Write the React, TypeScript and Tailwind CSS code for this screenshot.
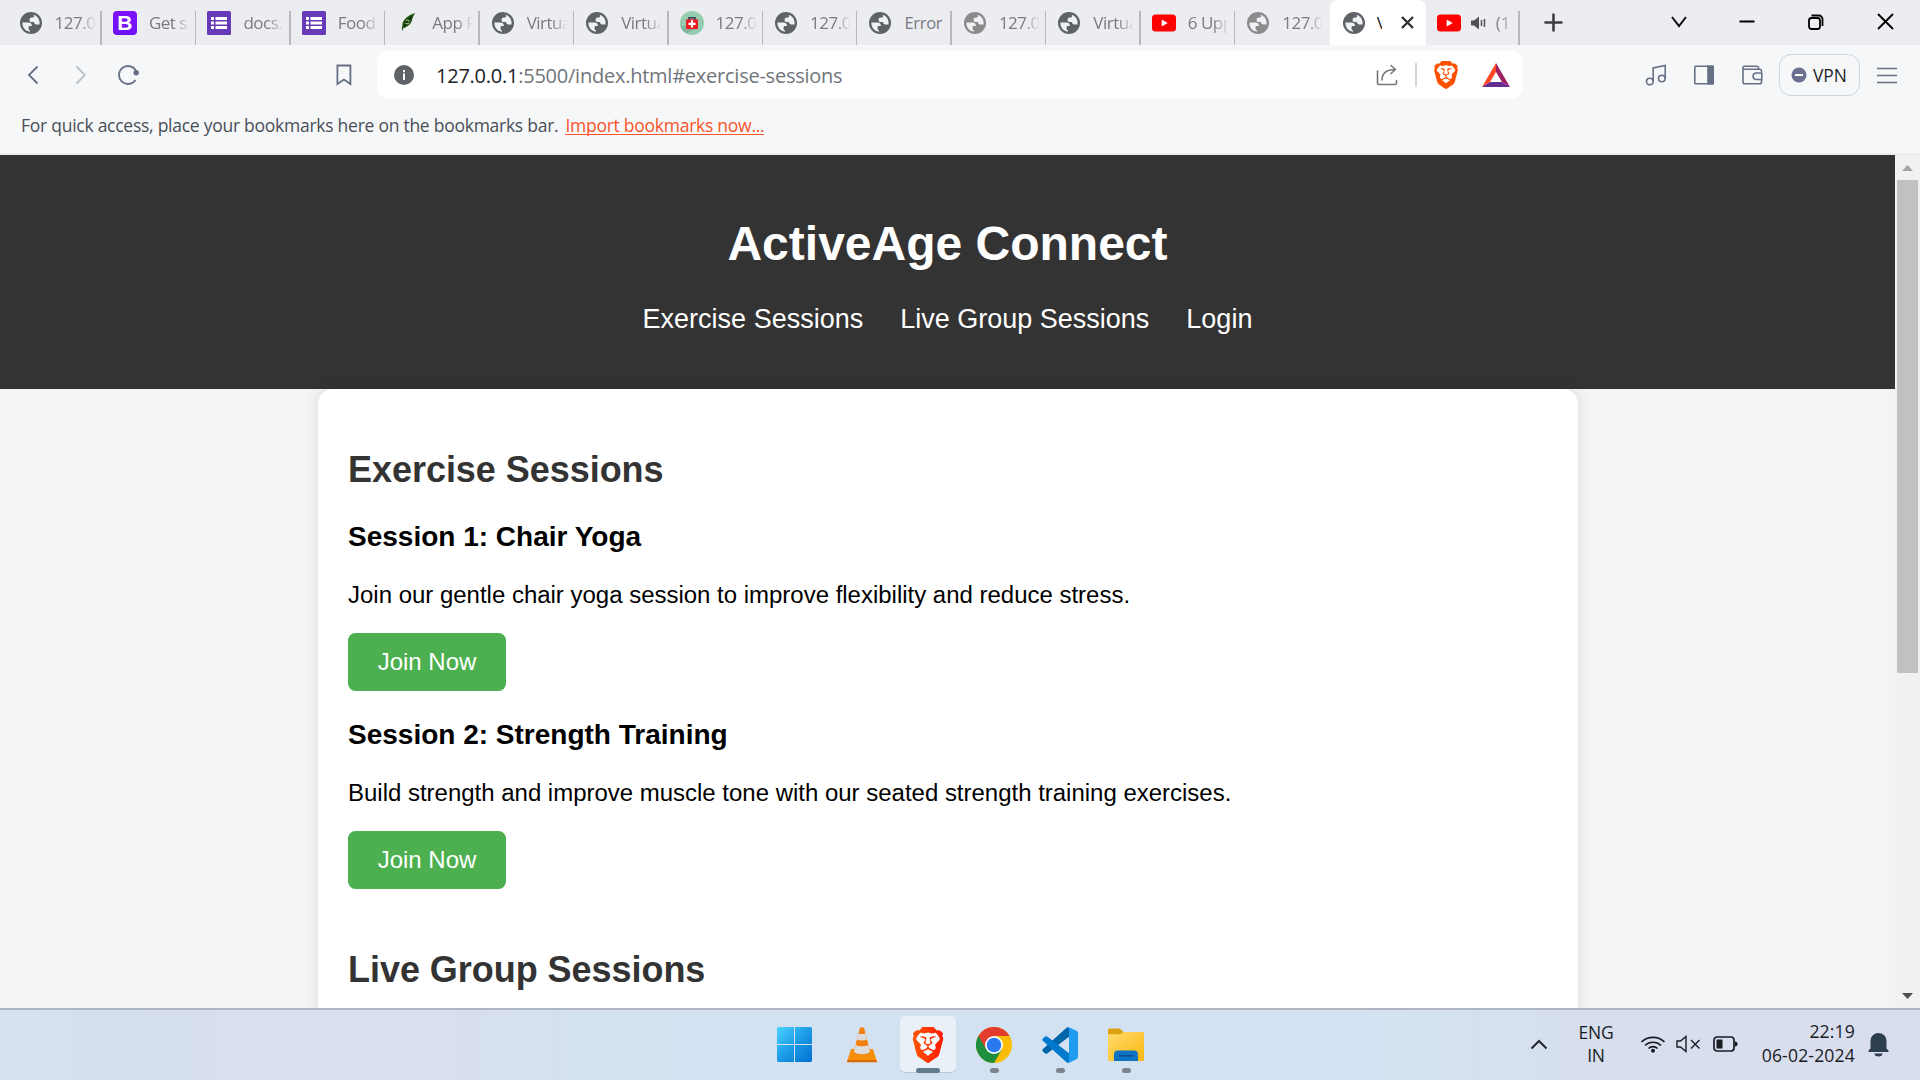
import React from "react";
import { SiBrave } from "react-icons/si";

type IconKind = "globe" | "globeMuted" | "bootstrap" | "forms" | "leaf" | "kit" | "youtube";

function Globe({ muted = false }: { muted?: boolean }) {
  return (
    <svg width="22" height="22" viewBox="0 0 22 22">
      <circle cx="11" cy="11" r="11" fill={muted ? "#8b8b8b" : "#5f6368"} />
      <path
        d="M2.4 10.6h6.2c2.3 0 3.3 1.2 3.3 3.4H9.6c-.7 0-1 .4-1 1v2.1c0 .9.6 1.4 1.4 1.4v1.2C5.5 19.500 2.300 15.500 2.400 10.600z"
        fill="#f0f1f4"
      />
      <path
        d="M13.500 2.700c3.700 1.100 6.100 4.400 6.100 8.300v1.500h-3.200c-1.700 0-2.300-1-2.300-2.400h-2.200c-1.500 0-2.300-.9-2.300-2.200 0-1.500.9-2.300 2.300-2.300h.7c1 0 1.500-.6 1.500-1.500z"
        fill="#f0f1f4"
      />
    </svg>
  );
}

function Youtube() {
  return (
    <svg width="24" height="24" viewBox="0 0 24 24">
      <rect y="3.500" width="24" height="17" rx="3.500" fill="#f00" />
      <path d="M9.700 8.500v7l6-3.500z" fill="#fff" />
    </svg>
  );
}

function TabIcon({ kind }: { kind: IconKind }) {
  switch (kind) {
    case "globe":
      return <Globe />;
    case "globeMuted":
      return <Globe muted />;
    case "youtube":
      return <Youtube />;
    case "bootstrap":
      return (
        <div className="flex size-6 items-center justify-center rounded-[4px] bg-linear-to-b from-[#8010fb] to-[#6c12f8] font-['Liberation_Sans',sans-serif] text-[21px] leading-6 font-bold text-white">
          B
        </div>
      );
    case "forms":
      return (
        <svg width="24" height="24" viewBox="0 0 24 24">
          <rect width="24" height="24" rx="1.500" fill="#673ab7" />
          <path d="M4 6h3v3H4zM8.500 6H20v3H8.500zM4 10.500h3v3H4zM8.500 10.500H20v3H8.500zM4 15h3v3H4zM8.500 15H20v3H8.500z" fill="#fff" />
        </svg>
      );
    case "leaf":
      return (
        <svg width="24" height="24" viewBox="0 0 24 24">
          <path d="M19 2C14 3.500 8 7 6.500 12.500c-.2 1.500 0 2.800-.6 4.200L6 20.500l1.300-3.300C12.500 16 15.500 12 16.200 8.500 16.800 6 17.800 4.500 19 2z" fill="#23560f" />
          <path d="M8 15.500c2-4 4-6.500 8-10" stroke="#0c2406" strokeWidth="1.200" fill="none" />
          <path d="M10 9.500q2-1 3.500.5M9.500 12.500q2 .5 3.500-.5" stroke="#dfe8dc" strokeWidth=".8" fill="none" />
        </svg>
      );
    case "kit":
      return (
        <svg width="24" height="24" viewBox="0 0 24 24">
          <circle cx="12" cy="12" r="12" fill="#96cdb0" />
          <path d="M6.500 15L.5 14.500A12 12 0 0 0 6 22.300L17 18z" fill="#84b39a" />
          <path d="M9 9V6.800h6V9" fill="none" stroke="#2b3f5c" strokeWidth="1.600" />
          <rect x="6" y="8.300" width="12" height="9.700" rx="1" fill="#ed1c24" />
          <path d="M10.900 9.300h2.200v2.500h2.500v2.200h-2.500v2.500h-2.200v-2.500H8.400v-2.200h2.500z" fill="#fff" />
        </svg>
      );
  }
}

const tabs: { icon: IconKind; title: string; noLine?: boolean }[] = [
  { icon: "globe", title: "127.0" },
  { icon: "bootstrap", title: "Get s" },
  { icon: "forms", title: "docs." },
  { icon: "forms", title: "Food" },
  { icon: "leaf", title: "App F" },
  { icon: "globe", title: "Virtua" },
  { icon: "globe", title: "Virtua" },
  { icon: "kit", title: "127.0" },
  { icon: "globe", title: "127.0" },
  { icon: "globe", title: "Error" },
  { icon: "globeMuted", title: "127.0" },
  { icon: "globe", title: "Virtua" },
  { icon: "youtube", title: "6 Upp" },
  { icon: "globeMuted", title: "127.0", noLine: true },
];

function TabStrip() {
  return (
    <div className="flex h-[45px] bg-[#ecedf1] pl-[7.500px]">
      {tabs.map((t, i) => (
        <div key={i} className="relative flex w-[94.450px] shrink-0 items-center">
          <div className="ml-[11px] flex size-6 shrink-0 items-center justify-center">
            <TabIcon kind={t.icon} />
          </div>
          {t.title === "Error" ? (
            <div className="ml-[12px] text-[16.500px] leading-6 tracking-[-0.300px] whitespace-nowrap text-[#797b80]">{t.title}</div>
          ) : (
            <div className="ml-[12px] w-[41px] overflow-hidden text-[17px] leading-6 tracking-[-0.500px] whitespace-nowrap text-[#797b80] [mask-image:linear-gradient(to_right,#000_60%,transparent_100%)]">
              {t.title}
            </div>
          )}
          {!t.noLine && <div className="absolute right-0 bottom-0 h-[34px] w-[1.500px] bg-[#b9b9b9]" />}
        </div>
      ))}
      <div className="flex w-[96px] shrink-0 items-center rounded-t-[8px] bg-white">
        <div className="ml-[13px]">
          <Globe />
        </div>
        <div className="ml-[12px] w-[5.500px] overflow-hidden text-[17px] leading-6 text-[#202124]">V</div>
        <svg className="ml-[18px]" width="15" height="15" viewBox="0 0 15 15" stroke="#2d2f33" strokeWidth="2.300">
          <path d="M2 2l11 11M13 2L2 13" />
        </svg>
      </div>
      <div className="relative flex w-[94px] shrink-0 items-center">
        <div className="ml-[11px]">
          <Youtube />
        </div>
        <svg className="ml-[9px]" width="17" height="14" viewBox="0 0 17 14" fill="#4f5155">
          <path d="M1 4.500h3L9 .5v13l-5-4H1z" />
          <path d="M11.500 4v6M14.500 3v8" stroke="#4f5155" strokeWidth="1.500" />
        </svg>
        <div className="ml-[9px] w-[13px] overflow-hidden text-[17px] leading-6 whitespace-nowrap text-[#808287] [mask-image:linear-gradient(to_right,#000_30%,#0006)]">
          (1
        </div>
        <div className="absolute right-0 bottom-0 h-[34px] w-[1.500px] bg-[#b9b9b9]" />
      </div>
      <svg className="mt-[13px] ml-[24px]" width="19" height="19" viewBox="0 0 19 19" stroke="#3c3e42" strokeWidth="2.600" strokeLinecap="round">
        <path d="M9.500 1.500v16M1.500 9.500h16" />
      </svg>
      <div className="mr-[26px] ml-auto flex items-center gap-[53px] pb-[2px]">
        <svg className="-mr-[1px]" width="16" height="12" viewBox="0 0 16 12" fill="none" stroke="#111" strokeWidth="2">
          <path d="M1 1l7 9 7-9" />
        </svg>
        <svg width="16" height="16" viewBox="0 0 16 16" stroke="#000" strokeWidth="2">
          <path d="M.5 7.500h15" />
        </svg>
        <svg width="16" height="16" viewBox="0 0 16 16" fill="none" stroke="#000" strokeWidth="1.800">
          <rect x="1" y="4" width="11" height="11" rx="2.500" />
          <path d="M3.500 1.500h7.500a3.500 3.500 0 0 1 3.500 3.500v7" />
        </svg>
        <svg width="17" height="17" viewBox="0 0 17 17" stroke="#000" strokeWidth="1.800">
          <path d="M1 1l15 15M16 1L1 16" />
        </svg>
      </div>
    </div>
  );
}

function Toolbar() {
  return (
    <div className="flex h-[60px] items-center bg-[#f5f7f9] text-[#667085]">
      <svg className="ml-[27px]" width="12" height="20" viewBox="0 0 12 20" fill="none" stroke="#667085" strokeWidth="1.800">
        <path d="M10.500 1.500L2 10l8.500 8.500" />
      </svg>
      <svg className="ml-[36px]" width="12" height="20" viewBox="0 0 12 20" fill="none" stroke="#bcc0c9" strokeWidth="1.800">
        <path d="M1.500 1.500L10 10l-8.500 8.500" />
      </svg>
      <svg className="ml-[31px]" width="22" height="20" viewBox="0 0 22 20" fill="none" stroke="#667085" strokeWidth="1.800">
        <path d="M18.300 6.500A9 9 0 1 0 17.500 15" />
        <circle cx="18.200" cy="7.800" r="2.700" fill="#667085" stroke="none" />
      </svg>
      <svg className="ml-[196px]" width="16" height="22" viewBox="0 0 16 22" fill="none" stroke="#667085" strokeWidth="1.800">
        <path d="M1.400 1.500h13v18.500l-6.500-4.500-6.500 4.500z" />
      </svg>
      <div className="ml-[25px] flex h-[48px] w-[1146px] items-center rounded-[12px] bg-white">
        <svg className="ml-[17px]" width="20" height="20" viewBox="0 0 20 20">
          <circle cx="10" cy="10" r="10" fill="#5f6368" />
          <path d="M9 8.600h2V15H9zM9 5h2v2.200H9z" fill="#fff" />
        </svg>
        <div className="ml-[22px] pt-[1px] text-[20px] leading-7 tracking-[-0.240px] whitespace-nowrap text-[#70757a]">
          <span className="text-[#202124]">127.0.0.1</span>:5500/index.html#exercise-sessions
        </div>
        <svg className="mr-[17px] ml-auto" width="22" height="22" viewBox="0 0 22 22" fill="none" stroke="#767676" strokeWidth="1.600" strokeLinecap="round" strokeLinejoin="round">
          <path d="M1.500 7v12a1.500 1.500 0 0 0 1.500 1.500h16a1.500 1.500 0 0 0 1.500-1.500v-2.500M6 16C6 9.500 10 5.500 19.500 5.500M15 1.500l4.500 4-4.500 4" />
        </svg>
        <div className="mr-[15px] h-6 w-[2px] bg-[#d5d5d5]" />
        <SiBrave className="mr-[22px] size-[28px] text-[#ff5000]" />
        <svg className="mr-[13px]" width="28" height="24" viewBox="0 0 28 24">
          <path d="M14 0L0 24l8-5 6-10z" fill="#ff4724" />
          <path d="M14 0l14 24-8-5-6-10z" fill="#9e1f63" />
          <path d="M0 24l8-5h12l8 5z" fill="#662d91" />
        </svg>
      </div>
      <svg className="ml-[122px]" width="22" height="22" viewBox="0 0 22 22" fill="none" stroke="#667085" strokeWidth="1.600">
        <circle cx="4.800" cy="17.500" r="3.300" />
        <circle cx="16.800" cy="14.500" r="3.300" />
        <path d="M8.200 17.500V4l12-2.500v13" />
      </svg>
      <svg className="ml-[27px]" width="20" height="20" viewBox="0 0 20 20" fill="none" stroke="#667085" strokeWidth="1.600">
        <rect x=".8" y="1.300" width="18.400" height="17.400" rx=".8" />
        <path d="M14 1.300h5v17.400h-5z" fill="#667085" />
      </svg>
      <svg className="ml-[28px]" width="21" height="20" viewBox="0 0 21 20" fill="none" stroke="#667085" strokeWidth="1.600">
        <path d="M19.500 7V6a1.800 1.800 0 0 0-1.800-1.700H1V17a1.800 1.800 0 0 0 1.800 1.800h14.900a1.800 1.800 0 0 0 1.800-1.800v-2M1 4.300V3a1.800 1.800 0 0 1 1.800-1.800h12a1.800 1.800 0 0 1 1.800 1.800v1.300" />
        <path d="M19.800 8h-6a3.300 3.300 0 0 0 0 6.500h6z" />
      </svg>
      <div className="ml-[16px] flex h-[42px] w-[81px] items-center rounded-[12px] border-[1.500px] border-[#d0d4dd] pl-[11px]">
        <svg width="16" height="16" viewBox="0 0 16 16">
          <circle cx="8" cy="8" r="7.500" fill="#6b7090" />
          <path d="M4 8h8" stroke="#fff" strokeWidth="2" />
        </svg>
        <div className="ml-[6px] text-[17.400px] leading-6 text-[#1d1f25]">VPN</div>
      </div>
      <svg className="ml-[17px]" width="20" height="18" viewBox="0 0 20 18" stroke="#667085" strokeWidth="1.700">
        <path d="M0 2.500h20M0 9.500h20M0 16.500h20" />
      </svg>
    </div>
  );
}

function Session({ title, text }: { title: string; text: string }) {
  return (
    <>
      <h3 className="text-[28px] leading-[32px] font-bold">{title}</h3>
      <p className="mt-[28px] text-[23.980px] leading-[27px]">{text}</p>
      <button className="mt-[25px] block h-[58px] w-[158px] rounded-[7.500px] bg-[#4caf50] text-center text-[24px] leading-[28px] text-white">
        Join Now
      </button>
    </>
  );
}

function WebPage() {
  return (
    <div className="h-[853px] w-[1895px] overflow-hidden bg-[#f4f4f4] font-['Liberation_Sans',Arial,sans-serif] text-black">
      <header className="flex h-[234px] flex-col items-center bg-[#333] pt-[61px] text-white">
        <h1 className="text-[48px] leading-[55px] font-bold">ActiveAge Connect</h1>
        <nav className="mt-[33px] flex gap-[37px] text-[27px] leading-[31px]">
          <a>Exercise Sessions</a>
          <a>Live Group Sessions</a>
          <a>Login</a>
        </nav>
      </header>
      <main className="ml-[318px] h-[900px] w-[1260px] rounded-[15px] bg-white px-[30px] pt-[60px] shadow-[0_0_15px_rgba(0,0,0,0.1)]">
        <h2 className="mb-[31px] text-[36px] leading-[41px] font-bold tracking-[-0.040px] text-[#333]">Exercise Sessions</h2>
        <Session title="Session 1: Chair Yoga" text="Join our gentle chair yoga session to improve flexibility and reduce stress." />
        <div className="h-[28px]" />
        <Session
          title="Session 2: Strength Training"
          text="Build strength and improve muscle tone with our seated strength training exercises."
        />
        <h2 className="mt-[60px] text-[36px] leading-[41px] font-bold tracking-[-0.040px] text-[#333]">Live Group Sessions</h2>
      </main>
    </div>
  );
}

function Scrollbar() {
  return (
    <div className="flex w-[25px] flex-col items-center bg-[#f1f1f1]">
      <svg className="mt-[10px]" width="11" height="6" viewBox="0 0 11 6">
        <path d="M5.500 0L11 6H0z" fill="#a3a3a3" />
      </svg>
      <div className="mt-[9px] h-[493px] w-[21px] bg-[#c1c1c1]" />
      <svg className="mt-auto mb-[9px]" width="11" height="6" viewBox="0 0 11 6">
        <path d="M5.500 6L11 0H0z" fill="#505050" />
      </svg>
    </div>
  );
}

function Windows() {
  return (
    <svg width="35" height="35" viewBox="0 0 35 35">
      <defs>
        <linearGradient id="win" x1="0" y1="0" x2="35" y2="35" gradientUnits="userSpaceOnUse">
          <stop stopColor="#4dd2ff" />
          <stop offset=".5" stopColor="#1c9be6" />
          <stop offset="1" stopColor="#0070d0" />
        </linearGradient>
      </defs>
      <path d="M1 0h16v17H0V1zM18 0h16l1 1v16H18zM0 18h17v17H1l-1-1zM18 18h17v16l-1 1H18z" fill="url(#win)" />
    </svg>
  );
}

function Vlc() {
  return (
    <svg width="30" height="36" viewBox="0 0 30 36">
      <path d="M4 22h22l4 12.500H0z" fill="#f78f0a" />
      <path d="M.4 33h29.200l.4 2.200H0z" fill="#d96a00" />
      <path d="M13 .8q2-1.300 4 0L23 24q0 4-8 4t-8-4z" fill="#f27f0c" />
      <path d="M11.500 6.500q3.500 1.200 7 0l1.600 6q-5 1.900-10.200 0zM8.600 18q6.400 2.600 12.800 0l1.600 6.200q-1 3-8 3t-8-3z" fill="#dcdcdc" />
    </svg>
  );
}

function Chrome() {
  return (
    <svg width="36" height="36" viewBox="0 0 36 36">
      <circle cx="18" cy="18" r="18" fill="#fbbc05" />
      <path d="M18 18L2.400 9A18 18 0 0 0 18 36l7.800-13.500z" fill="#1e8e3e" />
      <path d="M2.400 9A18 18 0 0 1 33.600 9H18v9l-7.800 4.500z" fill="#e33b2e" />
      <path d="M2.400 9l7.800 13.500L18 18z" fill="#1e8e3e" />
      <path d="M2.400 9l7.800 13.500L18 9z" fill="#e33b2e" />
      <path d="M2.400 9L10.200 22.500 4 24z" fill="#1e8e3e" />
      <circle cx="18" cy="18" r="9" fill="#fff" />
      <circle cx="18" cy="18" r="7.300" fill="#2a79f0" />
    </svg>
  );
}

function VsCode() {
  return (
    <svg width="36" height="36" viewBox="0 0 36 36">
      <path d="M27 .3v9.500L5.200 26.500q-1 .7-2 0L.7 24.300q-1-1 0-2L24.500.8Q25.700-.2 27 .3z" fill="#0065a9" />
      <path d="M27 35.700v-9.500L5.200 9.500q-1-.7-2 0L.7 11.700q-1 1 0 2l23.800 21.500q1.200 1 2.500.5z" fill="#007acc" />
      <path d="M27 .3l7.500 3.500Q36 4.600 36 6.200v23.600q0 1.600-1.500 2.400L27 35.700q-1 .4-2-.5 2 1 2-1.500V2.300Q27-.2 25 .8q1-1 2-.5z" fill="#1f9cf0" />
    </svg>
  );
}

function Folder() {
  return (
    <svg width="36" height="34" viewBox="0 0 36 34">
      <defs>
        <linearGradient id="fold" x1="0" y1="0" x2="1" y2="1">
          <stop stopColor="#ffdb6e" />
          <stop offset="1" stopColor="#fbb80f" />
        </linearGradient>
      </defs>
      <path d="M0 2Q0 .500 1.500.500h9Q12 .500 13 1.500L15.500 4H35q1 0 1 1v6H0z" fill="#dda00f" />
      <path d="M0 7q0-.800 1-.800h11L15.500 4H35q1 0 1 1v27q0 1-1 1H1q-1 0-1-1z" fill="url(#fold)" />
      <path d="M6 33v-6.500q0-4 4-4h16q4 0 4 4V33z" fill="#0f73c4" />
      <path d="M11 27.800h14" stroke="#0a4f94" strokeWidth="1.500" />
    </svg>
  );
}

function BraveTask() {
  return (
    <div className="relative">
      <svg width="0" height="0" className="absolute">
        <defs>
          <linearGradient id="brave" x1="0" y1="0" x2="1" y2="0">
            <stop stopColor="#ff5500" />
            <stop offset="1" stopColor="#ff1a00" />
          </linearGradient>
        </defs>
      </svg>
      <div className="absolute top-[7px] left-[8px] h-[22px] w-[20px] bg-white [clip-path:polygon(0_0,100%_0,90%_60%,50%_100%,10%_60%)]" />
      <SiBrave className="relative size-9" style={{ fill: "url(#brave)" }} />
    </div>
  );
}

function TaskCell({ children, running = false, active = false }: { children: React.ReactNode; running?: boolean; active?: boolean }) {
  return (
    <div className="relative flex h-[70px] w-[66px] items-center justify-center">
      {active && <div className="absolute top-[6px] left-[5px] h-[56px] w-[56px] rounded-[5px] bg-[#e9f0f8] shadow-[0_1px_1px_#b9c7d6]" />}
      <div className="relative -mt-[1px]">{children}</div>
      {running && <div className="absolute bottom-[7px] left-[29px] h-[5px] w-[9px] rounded-full bg-[#7c848c]" />}
      {active && <div className="absolute bottom-[7px] left-[21px] h-[5px] w-[24px] rounded-full bg-[#627a89]" />}
    </div>
  );
}

function Taskbar() {
  return (
    <div className="flex h-[72px] items-start border-t-2 border-[#aeb5c1] bg-[linear-gradient(90deg,#d6e2f0_0%,#d5dfef_8%,#d8dfee_12%,#d8dfee_23%,#d3e1f1_31%,#d3e2f2_70%,#d5e0f0_79%,#d8deee_84%,#d8deee_100%)] text-[#191c22]">
      <div className="ml-[761px] flex">
        <TaskCell>
          <Windows />
        </TaskCell>
        <div className="w-[2px]" />
        <TaskCell>
          <Vlc />
        </TaskCell>
        <TaskCell active>
          <BraveTask />
        </TaskCell>
        <TaskCell running>
          <Chrome />
        </TaskCell>
        <TaskCell running>
          <VsCode />
        </TaskCell>
        <TaskCell running>
          <Folder />
        </TaskCell>
      </div>
      <svg className="mt-[29px] ml-[371px]" width="18" height="11" viewBox="0 0 18 11" fill="none" stroke="#23262c" strokeWidth="2">
        <path d="M1.500 9.500L9 2l7.500 7.500" />
      </svg>
      <div className="mt-[11px] ml-[28px] w-[40px] text-center text-[17.500px] leading-[23px] tracking-[-0.200px]">
        ENG
        <br />
        IN
      </div>
      <svg className="mt-[25px] ml-[24px]" width="26" height="18" viewBox="0 0 26 18" fill="none" stroke="#191c22" strokeWidth="1.700">
        <path d="M1.500 7a16.500 16.500 0 0 1 23 0M5 10.500a11.500 11.500 0 0 1 16 0M8.500 13.500a6.500 6.500 0 0 1 9 0" />
        <circle cx="13" cy="15.800" r="2" fill="#191c22" stroke="none" />
      </svg>
      <svg className="mt-[25px] ml-[10px]" width="25" height="18" viewBox="0 0 25 18" fill="none" stroke="#191c22" strokeWidth="1.400">
        <path d="M1 6h3.500l5.500-4.500v15L4.500 12H1zM15 5l8.500 8.500M23.500 5L15 13.500" />
      </svg>
      <svg className="mt-[26px] ml-[12px]" width="25" height="16" viewBox="0 0 25 16">
        <rect x="1" y="1" width="20" height="14" rx="3" fill="none" stroke="#191c22" strokeWidth="1.700" />
        <rect x="3.500" y="3.500" width="6" height="9" rx=".5" fill="#191c22" />
        <path d="M22 5.500q2.500 0 2.500 2.500T22 10.500z" fill="#191c22" />
      </svg>
      <div className="mt-[9px] ml-auto text-right text-[17.600px] leading-[24px] tracking-[0.150px]">
        22:19
        <br />
        06-02-2024
      </div>
      <svg className="mt-[23px] mr-[31px] ml-[13px]" width="21" height="24" viewBox="0 0 21 24" fill="#2d3e4e">
        <path d="M10.500 0a8 8 0 0 0-8 8v7.500L.5 17.500V19h20v-1.500l-2-2V8a8 8 0 0 0-8-8zM6.500 20.500h8a4 3 0 0 1-8 0z" />
      </svg>
    </div>
  );
}

export default function App() {
  return (
    <div className="h-[1080px] w-[1920px] overflow-hidden font-['Open_Sans','Noto_Sans',sans-serif]">
      <TabStrip />
      <Toolbar />
      <div className="flex h-[50px] border-b-2 border-[#e9ecef] bg-[#f5f7f9] pt-[7px] pl-[21px] text-[17.500px] leading-[26px] tracking-[-0.260px] whitespace-nowrap text-[#4a4f57]">
        <span>For quick access, place your bookmarks here on the bookmarks bar.</span>
        <a className="ml-[7px] h-[23px] border-b border-[#fb542b] text-[#fb542b]">Import bookmarks now...</a>
      </div>
      <div className="flex h-[853px]">
        <WebPage />
        <Scrollbar />
      </div>
      <Taskbar />
    </div>
  );
}
